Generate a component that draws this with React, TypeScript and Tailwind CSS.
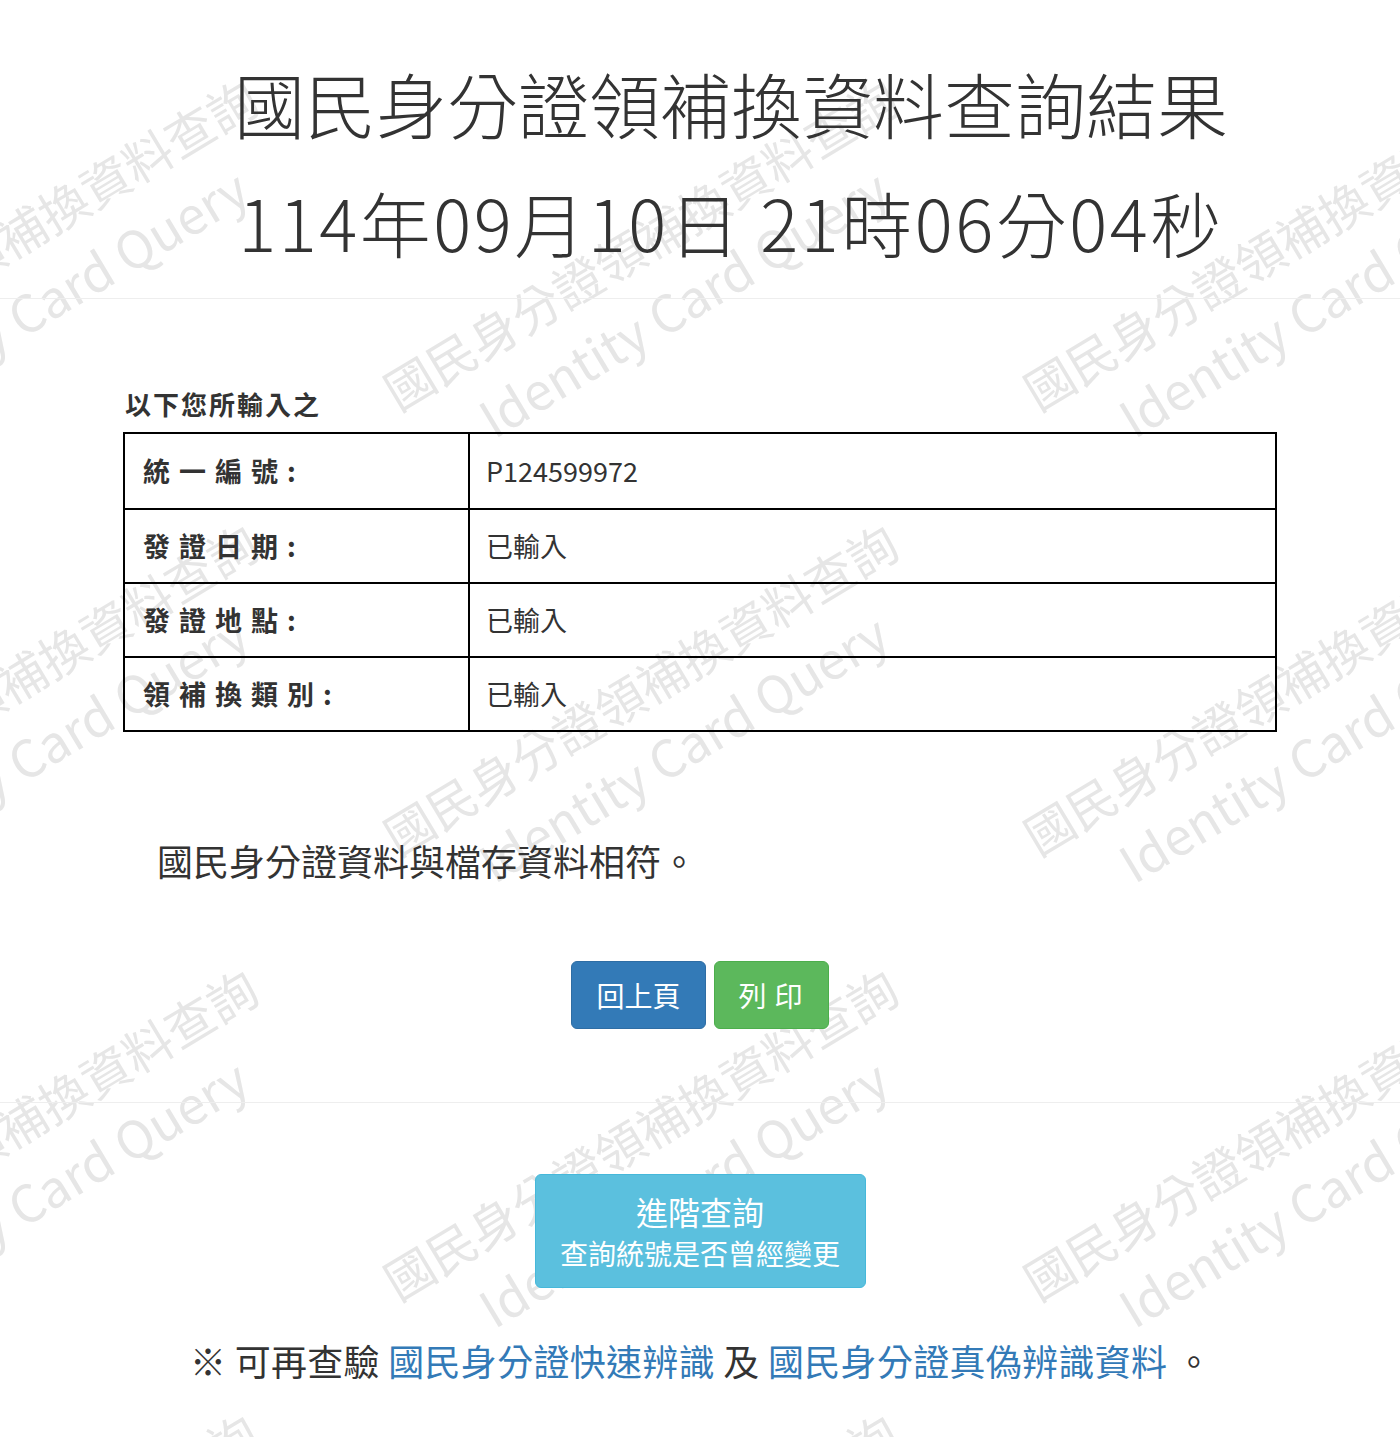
import React from "react";

const rows = [
  { label: "統一編號", value: "P124599972" },
  { label: "發證日期", value: "已輸入" },
  { label: "發證地點", value: "已輸入" },
  { label: "領補換類別", value: "已輸入" },
];

// watermark tiles (bottom-left of the first line)
const marks: { x: number; y: number }[] = [];
for (const x of [-255, 385, 1025]) {
  for (const y of [-35, 410, 855, 1300, 1745]) {
    marks.push({ x, y });
  }
}

function Watermark() {
  return (
    <div className="pointer-events-none absolute inset-0 overflow-hidden">
      {marks.map((m, i) => (
        <div
          key={i}
          className="absolute origin-top-left -rotate-[31deg] whitespace-nowrap text-[#e6e6e6]"
          style={{ left: m.x - 18, top: m.y - 50 }}
        >
          <div className="text-[49px] leading-[80px]">國民身分證領補換資料查詢</div>
          <div className="pl-[68px] text-[51px] leading-[64px]">Identity Card Query</div>
        </div>
      ))}
    </div>
  );
}

export default function App() {
  return (
    <div className="relative min-h-[1437px] w-full overflow-hidden bg-white font-['Noto_Sans_CJK_TC','Noto_Sans',sans-serif] text-[#333]">
      <Watermark />

      <div className="relative">
        <h1 className="mt-[43px] pl-[62px] text-center text-[71px] font-light leading-[119px] text-[#333]">
          國民身分證領補換資料查詢結果
          <br />
          <span className="tracking-[2.5px]">114年09月10日 21時06分04秒</span>
        </h1>

        <hr className="mt-[17px] border-t border-[#eee]" />

        <div className="mx-auto w-[1154px]">
          <p className="mt-[87px] pl-[2px] text-[26px] font-bold leading-[36px] tracking-[2px]">以下您所輸入之</p>

          <div className="mt-[10px] border-2 border-black">
            {rows.map((r, i) => (
              <div key={i} className={`flex h-[74px] items-center ${i > 0 ? "border-t-2 border-black" : ""}`}>
                <div className="flex h-full w-[345px] items-center border-r-2 border-black pl-[18px] text-[27px] font-bold">
                  <span className="tracking-[9px]">{r.label}</span>
                  <span>:</span>
                </div>
                <div className="flex h-full flex-1 items-center pl-[16px] text-[27px]">{r.value}</div>
              </div>
            ))}
          </div>

          <p className="mt-[104px] pl-[34px] text-[36px] leading-[48px]">國民身分證資料與檔存資料相符。</p>

          <div className="mt-[77px] flex justify-center gap-[8px]">
            <button className="h-[68px] w-[135px] rounded-[6px] border border-[#2e6da4] bg-[#337ab7] text-[28px] text-white">
              回上頁
            </button>
            <button className="h-[68px] w-[115px] rounded-[6px] border border-[#4cae4c] bg-[#5cb85c] pl-[6px] text-[28px] tracking-[8px] text-white">
              列印
            </button>
          </div>
        </div>

        <hr className="mt-[73px] border-t border-[#eee]" />

        <div className="mt-[71px] flex justify-center">
          <button className="flex h-[114px] w-[331px] flex-col items-center justify-center rounded-[6px] border border-[#46b8da] bg-[#5bc0de] text-white">
            <span className="text-[32px] leading-[44px]">進階查詢</span>
            <span className="text-[28px] leading-[40px]">查詢統號是否曾經變更</span>
          </button>
        </div>

        <p className="mt-[48px] pl-[2px] text-center text-[36px] leading-[48px] tracking-[0.3px]">
          ※ 可再查驗 <a className="text-[#337ab7]">國民身分證快速辨識</a> 及{" "}
          <a className="text-[#337ab7]">國民身分證真偽辨識資料</a> 。
        </p>
      </div>
    </div>
  );
}
